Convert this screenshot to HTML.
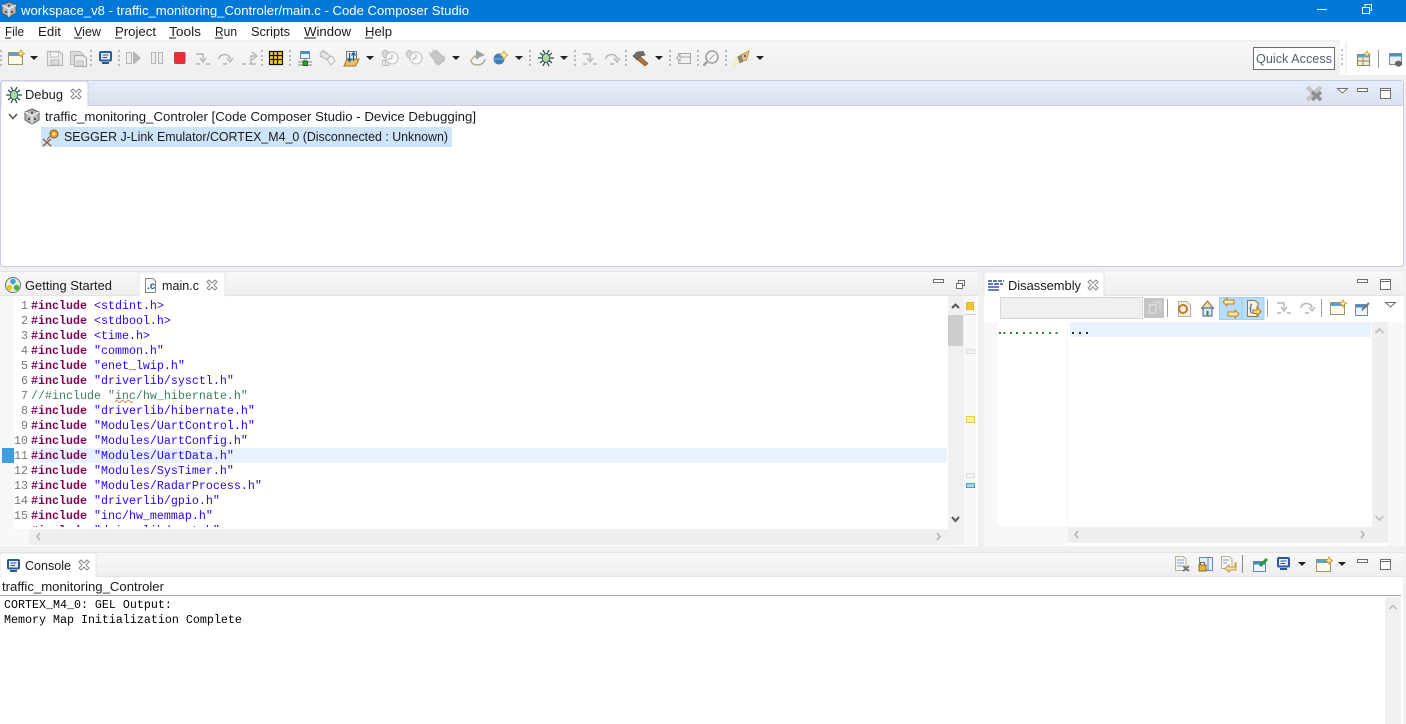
<!DOCTYPE html>
<html><head><meta charset="utf-8"><title>Code Composer Studio</title>
<style>
html,body{margin:0;padding:0;background:#f0f0f0;width:1406px;height:724px;overflow:hidden}
svg{display:block}
text{font-family:"Liberation Sans",sans-serif;font-size:13px;fill:#1a1a1a;white-space:pre}
.m{font-family:"Liberation Mono",monospace;font-size:11.67px}
.k{fill:#7f0055;font-weight:bold}
.s{fill:#2a00ff}
.c{fill:#3f7f5f}
.n{fill:#787878;text-anchor:end}
</style></head><body>
<svg width="1406" height="724" viewBox="0 0 1406 724" xmlns="http://www.w3.org/2000/svg">
<defs>
<linearGradient id="tb" x1="0" y1="0" x2="0" y2="1"><stop offset="0" stop-color="#f8f8f8"/><stop offset="1" stop-color="#eeeeee"/></linearGradient>
<linearGradient id="db" x1="0" y1="0" x2="0" y2="1"><stop offset="0" stop-color="#e7ecfb"/><stop offset="1" stop-color="#dbe0ef"/></linearGradient>
<linearGradient id="hd" x1="0" y1="0" x2="0" y2="1"><stop offset="0" stop-color="#f8f8f8"/><stop offset="1" stop-color="#eeeeee"/></linearGradient>
<symbol id="ar" overflow="visible"><path d="M-4 -2H4L0 2Z" fill="#222"/></symbol>
<symbol id="gr" overflow="visible"><path d="M0 0v2M0 5v2M0 9v2M0 14v2" stroke="#a8a8a0" stroke-width="1.500" fill="none"/></symbol>
<symbol id="x" overflow="visible"><path d="M-5 -3L-3 -5L0 -2L3 -5L5 -3L2 0L5 3L3 5L0 2L-3 5L-5 3L-2 0Z" fill="#fff" stroke="#8a8a8a" stroke-width="1"/></symbol>
<symbol id="min" overflow="visible"><rect x="0" y="0" width="10" height="3" fill="#fff" stroke="#6e6e6e"/></symbol>
<symbol id="max" overflow="visible"><rect x="0" y="0" width="10" height="10" fill="#fff" stroke="#6e6e6e"/><path d="M0 2H10" stroke="#6e6e6e"/></symbol>
<symbol id="new" overflow="visible"><rect x="0.5" y="2.500" width="14" height="12" fill="#fdfbe8" stroke="#a0956a"/><rect x="1" y="3" width="13" height="3" fill="#5b9fd8"/><path d="M13 0l1.200 2.300 2.300 1.200-2.300 1.200-1.200 2.300-1.200-2.300-2.300-1.200 2.300-1.200z" fill="#fff2b0" stroke="#c99a20" stroke-width=".9"/></symbol>
<symbol id="cube" overflow="visible"><path d="M8 0L15 3V11L8 15L1 11V3Z" fill="#b8b8b8" stroke="#5a5a5a"/><path d="M1 3L8 7L15 3M8 7V15" stroke="#f2f2f2" fill="none" stroke-width="1.2"/><circle cx="5" cy="10" r="1" fill="#333"/><circle cx="11" cy="10" r="1" fill="#333"/><circle cx="8" cy="3.5" r="1" fill="#333"/></symbol>
<symbol id="bug" overflow="visible"><path d="M2 3L14 13M14 3L2 13M0 8H16M5 0L7 4M11 0L9 4M5 16L7 12M11 16L9 12" stroke="#28564c" stroke-width="1.300" fill="none"/><ellipse cx="8" cy="8" rx="3.700" ry="4.500" fill="#b4d4a8" stroke="#2d6a5c"/></symbol>
<symbol id="mon" overflow="visible"><rect x="1" y="1" width="11" height="8.500" rx="1" fill="#e8eef8" stroke="#2a5a9c" stroke-width="2"/><path d="M3.500 4H9.500M3.500 6.500H8" stroke="#2a5a9c"/><path d="M3 12H10" stroke="#2a5a9c" stroke-width="2"/></symbol>
<symbol id="into" overflow="visible"><path d="M1 2H8V8M5 6L8 10L11 6M1 12H5M11 12H15" stroke="#b4b4b4" stroke-width="1.4" fill="none"/></symbol>
<symbol id="over" overflow="visible"><path d="M2 7C2 1 13 1 13 7M10 6L13 10L16 6M6 12H10" stroke="#b4b4b4" stroke-width="1.4" fill="none"/></symbol>
</defs>

<rect width="1406" height="724" fill="#f0f0f0"/>
<!-- title -->
<rect width="1406" height="22" fill="#0078d7"/>
<use href="#cube" x="1" y="2"/>
<text x="21" y="15" textLength="448" lengthAdjust="spacingAndGlyphs" style="fill:#fff">workspace_v8 - traffic_monitoring_Controler/main.c - Code Composer Studio</text>
<path d="M1317 9.5H1327" stroke="#fff"/>
<path d="M1362.500 7.500H1369.500V13.500H1362.500ZM1365 7.500V4.500H1371.500V10.500H1369.500" fill="none" stroke="#fff"/>
<!-- menu -->
<rect y="22" width="1406" height="19" fill="#fff"/>
<g>
<text x="5" y="36" textLength="19" lengthAdjust="spacingAndGlyphs">File</text><path d="M5 38H11" stroke="#1a1a1a"/>
<text x="38" y="36" textLength="23" lengthAdjust="spacingAndGlyphs">Edit</text>
<text x="74" y="36" textLength="27" lengthAdjust="spacingAndGlyphs">View</text><path d="M74 38H82" stroke="#1a1a1a"/>
<text x="115" y="36" textLength="41" lengthAdjust="spacingAndGlyphs">Project</text><path d="M115 38H122" stroke="#1a1a1a"/>
<text x="169" y="36" textLength="32" lengthAdjust="spacingAndGlyphs">Tools</text><path d="M169 38H176" stroke="#1a1a1a"/>
<text x="215" y="36" textLength="22" lengthAdjust="spacingAndGlyphs">Run</text><path d="M215 38H223" stroke="#1a1a1a"/>
<text x="251" y="36" textLength="39" lengthAdjust="spacingAndGlyphs">Scripts</text>
<text x="304" y="36" textLength="47" lengthAdjust="spacingAndGlyphs">Window</text><path d="M304 38H316" stroke="#1a1a1a"/>
<text x="365" y="36" textLength="27" lengthAdjust="spacingAndGlyphs">Help</text><path d="M365 38H373" stroke="#1a1a1a"/>
</g>
<!-- toolbar -->
<rect y="41" width="1406" height="34" fill="#fff"/>
<rect y="40" width="1340" height="35" fill="url(#tb)"/>
<rect y="40" width="1340" height="2" fill="#f0f0f0"/>
<rect x="1347" y="42" width="59" height="32" fill="#fff"/>
<rect x="1340" y="42" width="7" height="32" fill="#fff"/>
<rect x="1345" y="42" width="2" height="32" fill="#f0f0f0"/>
<g>
<use href="#gr" x="1" y="50"/><use href="#gr" x="91" y="50"/><use href="#gr" x="119" y="50"/><use href="#gr" x="262" y="50"/><use href="#gr" x="290" y="50"/><use href="#gr" x="530" y="50"/><use href="#gr" x="575" y="50"/><use href="#gr" x="626" y="50"/><use href="#gr" x="670" y="50"/><use href="#gr" x="698" y="50"/><use href="#gr" x="726" y="50"/>
<use href="#gr" x="1342" y="49"/>
<use href="#new" x="8" y="50"/><use href="#ar" x="34" y="58"/>
<!-- save -->
<path d="M47.500 51.500H59.500L62.500 54V65.500H47.500Z" fill="#eee" stroke="#b8b8b8" stroke-width="1.2"/><rect x="50.500" y="52" width="8" height="5" fill="#f8f8f8" stroke="#c0c0c0"/><rect x="51" y="60" width="8" height="5" fill="#ddd" stroke="#b8b8b8"/>
<path d="M70.500 51.500H80L84 55V64.500H70.500Z" fill="#ddd" stroke="#b8b8b8"/><path d="M74.500 55.500H83L86.500 58V66.500H74.500Z" fill="#eee" stroke="#b0b0b0" stroke-width="1.2"/><rect x="77" y="61" width="6" height="5" fill="#ddd" stroke="#b8b8b8"/>
<use href="#mon" x="99" y="51"/>
<!-- resume, suspend, stop -->
<rect x="126.500" y="52.500" width="5" height="11" fill="#eee" stroke="#b4b4b4"/><path d="M133 51V65L141 58Z" fill="#b4b4b4"/>
<rect x="151.500" y="52.500" width="4" height="11" fill="#eee" stroke="#b4b4b4"/><rect x="158.500" y="52.500" width="4" height="11" fill="#eee" stroke="#b4b4b4"/>
<rect x="174.500" y="52.500" width="10.500" height="11" rx="1" fill="#ec2c38" stroke="#c63a3a"/>
<use href="#into" x="195" y="52"/><use href="#over" x="217" y="52"/>
<path d="M242 64H246M251 64V56H255M252 52L257 56L252 60M249 64H256" stroke="#b4b4b4" stroke-width="1.4" fill="none"/>
<!-- table -->
<rect x="270" y="52" width="12" height="12" fill="#ffc832"/><path d="M269.500 51.500H282.500V64.500H269.500ZM273.500 52V64M277.500 52V64M270 55.500H282M270 59.500H282" fill="none" stroke="#111" stroke-width="1.2"/>
<!-- connect -->
<rect x="300.500" y="51.500" width="9" height="7" fill="#eaf3fb" stroke="#6a88a8"/><rect x="300.500" y="51.500" width="9" height="2.500" fill="#4a8cc8"/><path d="M305 58V62M298 62H312M298 65H312" stroke="#8a8a7a"/><rect x="303" y="61" width="4.500" height="4.500" fill="#2e9a3e" stroke="#1d6a2a"/>
<!-- plug disabled -->
<path d="M320 53L324 51L330 56L327 60L321 56Z" fill="#e8e8e8" stroke="#b8b8b8"/><path d="M322 50L324 53M327 52L325 54M320 57L323 56" stroke="#b8b8b8"/><path d="M327 59L332 56L335 61L331 65Z" fill="#f4f4f4" stroke="#b8b8b8"/>
<!-- load -->
<path d="M346.500 51.500H356.500V62.500H346.500Z" fill="#f4f4f4" stroke="#777"/><path d="M344 66L347 59H359L355.500 66Z" fill="#e8c068" stroke="#a07820"/><path d="M349.500 53V61M353.500 53V61M347.500 58.500L349.500 61.500L351.500 58.500M351.500 55.500L353.500 52.500L355.500 55.500" stroke="#1f5f9f" stroke-width="1.300" fill="none"/>
<use href="#ar" x="370" y="58"/>
<!-- clocks -->
<g stroke="#bcbcbc"><path d="M382 52L385 50L393 55L389 62L383 56Z" fill="#d8d8d8"/><path d="M382.500 60.500H388.500V65.500H382.500ZM385.500 60.500V65.500" fill="#eee"/><circle cx="392" cy="58" r="6" fill="#fafafa"/><path d="M392 54V58L388 59.500" fill="none" stroke="#aaa"/></g>
<g stroke="#bcbcbc"><path d="M406 53L409 50L417 55L413 62L407 56Z" fill="#d8d8d8"/><circle cx="416" cy="58" r="6" fill="#fafafa"/><path d="M416 54V58L412 59.500" fill="none" stroke="#aaa"/></g>
<path d="M430 55L436 50L445 59L439 65Z" fill="#c8c8c8" stroke="#bcbcbc"/><path d="M429 52L433 55M432 50L436 53M437 65L434 61M441 64L437 61M444 62L441 59M445 56L442 57" stroke="#bcbcbc" fill="none"/>
<use href="#ar" x="456" y="58"/>
<path d="M471 59C470 67 484 67 485 59M472 59L475 56L478 59" fill="none" stroke="#b0a890" stroke-width="1.400"/><path d="M476 50V59L485 55Z" fill="#9aa8a0"/>
<ellipse cx="499" cy="59" rx="5.500" ry="5.500" fill="#3f7fc0"/><path d="M493.500 59H504.500" stroke="#8fb8e0"/><path d="M504 51l1.500 2.500L508 55l-2.500 1.500L504 59l-1.500-2.500L500 55l2.500-1.500z" fill="#fff3b8" stroke="#d09a20" stroke-width=".8"/>
<use href="#ar" x="519" y="58"/>
<use href="#bug" x="538" y="50"/><use href="#ar" x="564" y="58"/>
<use href="#into" x="582" y="52"/><use href="#over" x="604" y="52"/>
<!-- hammer -->
<path d="M633 56L637 52L643 51.500L645 55L641 56L637 60Z" fill="#6d6d6d" stroke="#444" stroke-width=".6"/><path d="M640 56.500L648 63.500L645 66L637 59.500Z" fill="#b07438" stroke="#7a4a1c" stroke-width=".6"/>
<use href="#ar" x="659" y="58"/>
<!-- block -->
<path d="M678.500 53.500H690.500V63.500H678.500ZM679 57H690" fill="#f0f0f0" stroke="#a8a8a8"/><path d="M676.500 58L680 55V61Z" fill="#fff" stroke="#a8a8a8"/>
<!-- search -->
<circle cx="712" cy="57" r="6" fill="#f4f4f4" stroke="#a0a0a0" stroke-width="1.600"/><path d="M707 62L703.500 65.500" stroke="#9a9a9a" stroke-width="2.400"/><path d="M709.500 59.500L714.500 54.500" stroke="#a0a0a0"/>
<!-- pen -->
<path d="M741 55L749 51L746.500 60L742.500 61Z" fill="#f0c878" stroke="#c49040"/><path d="M737 57L741 54.500L743.500 61.500L739.500 63.500Z" fill="#8e8678"/><path d="M737 57L739.500 63.500L733 66Z" fill="#fff4c8" stroke="#f0e0a0" stroke-width=".6"/><circle cx="745" cy="56" r="1.200" fill="#4070a0"/>
<use href="#ar" x="760" y="58"/>
</g>
<!-- quick access -->
<rect x="1253.500" y="47.500" width="81" height="22" fill="#fff" stroke="#6e6e6e"/>
<text x="1256" y="63" textLength="76" lengthAdjust="spacingAndGlyphs" style="fill:#54606c">Quick Access</text>
<g>
<rect x="1357.500" y="54.500" width="12" height="11" fill="#f4ecd0" stroke="#8a8468"/><rect x="1358" y="55" width="11" height="2.500" fill="#6aa2cc"/><path d="M1363 58V65M1358 61H1369" stroke="#8a8468"/><path d="M1367 51l1 2 2 1-2 1-1 2-1-2-2-1 2-1z" fill="#fff2b0" stroke="#c99a20" stroke-width=".8"/>
<path d="M1378.500 50V68" stroke="#9a9a9a"/>
<rect x="1389.500" y="53.500" width="12" height="11" fill="#e6eef4" stroke="#6f8da5"/><rect x="1390" y="54" width="11" height="2.500" fill="#4a8cc8"/><path d="M1395 62L1398.500 60.500L1402 62V65L1398.500 67L1395 65Z" fill="#666"/>
</g>
<!-- DEBUG panel -->
<rect x="0.500" y="80.500" width="1403" height="186" rx="3" fill="#fff" stroke="#c6cbdf"/>
<rect x="1" y="81" width="1402" height="25" fill="url(#db)"/>
<path d="M1 105.500H1403" stroke="#c8cde0"/>
<path d="M1 106V84Q1 81 4 81H85Q88 81 88 84V106Z" fill="#fff" stroke="#c8cde0"/>
<rect x="2" y="104" width="85" height="3" fill="#fff"/>
<use href="#bug" x="6" y="87"/>
<text x="25" y="99" textLength="38" lengthAdjust="spacingAndGlyphs">Debug</text>
<use href="#x" x="76" y="94"/>
<path d="M1307 87L1321 100M1321 87L1307 100" stroke="#c4c4c4" stroke-width="4"/><path d="M1312 92L1321 100M1321 92L1312 100" stroke="#8e8e8e" stroke-width="3.400"/>
<path d="M1337.500 88.500H1347.500L1342.500 93Z" fill="#fff" stroke="#6e6e6e"/>
<use href="#min" x="1357.500" y="88.500"/>
<use href="#max" x="1380.500" y="88.500"/>
<path d="M9 114L13 118.500L17 114" stroke="#555" stroke-width="1.600" fill="none"/>
<use href="#cube" x="24" y="109"/>
<text x="45" y="121" textLength="431" lengthAdjust="spacingAndGlyphs">traffic_monitoring_Controler [Code Composer Studio - Device Debugging]</text>
<rect x="41" y="127" width="411" height="20" fill="#cde4fa"/>
<path d="M43 139L51 146M51 139L43 146" stroke="#9a5030" stroke-width="1.300"/><path d="M47 140L50 136" stroke="#776" stroke-width="1.200"/><circle cx="54" cy="134" r="4" fill="#e8a028" stroke="#8a5a10"/><circle cx="54" cy="134" r="1.400" fill="#fff2c0"/>
<text x="64" y="141" textLength="384" lengthAdjust="spacingAndGlyphs">SEGGER J-Link Emulator/CORTEX_M4_0 (Disconnected : Unknown)</text>

<!-- EDITOR panel -->
<rect x="0" y="271" width="978" height="275" fill="#fff"/>
<rect x="0" y="272" width="978" height="24" fill="url(#hd)"/>
<path d="M0 271.500H978" stroke="#e4e4e4"/>
<path d="M0 295.500H978" stroke="#e4e4e4"/>
<path d="M139 296V274Q139 272 141 272H223Q225 272 225 274V296Z" fill="#fff" stroke="#e4e4e4"/>
<rect x="140" y="294" width="84" height="3" fill="#fff"/>
<circle cx="13" cy="285" r="7.500" fill="#e4ece4" stroke="#6a7a6a"/><circle cx="13" cy="281.500" r="2.700" fill="#3aa0dc"/><circle cx="9.500" cy="287.500" r="2.700" fill="#e8c820"/><circle cx="16.500" cy="287.500" r="2.700" fill="#4cae3c"/>
<text x="25" y="290" textLength="87" lengthAdjust="spacingAndGlyphs">Getting Started</text>
<path d="M145.500 278.500H153L155.500 281V292.500H145.500Z" fill="#f8fbff" stroke="#8a8a7a"/><text x="147" y="289" style="font-size:10px;font-weight:bold;fill:#1a5a8c">.c</text>
<text x="162" y="290" textLength="37" lengthAdjust="spacingAndGlyphs">main.c</text>
<use href="#x" x="212" y="285"/>
<use href="#min" x="933.500" y="279.500"/>
<path d="M956.500 283.500H962.500V288.500H956.500ZM958.500 283V280.500H964.500V285.500H962.500" fill="#fff" stroke="#6e6e6e"/>
<!-- gutter -->
<rect x="0" y="296" width="14" height="250" fill="#f8f8f8"/>
<rect x="2" y="448" width="12" height="15" fill="#3d9fe0"/>
<rect x="31" y="448" width="916" height="15" fill="#e8f2fe"/>
<g class="m">
<text class="m n" x="28" y="309">1</text><text class="m n" x="28" y="324">2</text><text class="m n" x="28" y="339">3</text><text class="m n" x="28" y="354">4</text><text class="m n" x="28" y="369">5</text><text class="m n" x="28" y="384">6</text><text class="m n" x="28" y="399">7</text><text class="m n" x="28" y="414">8</text><text class="m n" x="28" y="429">9</text><text class="m n" x="28" y="444">10</text><text class="m n" x="28" y="459">11</text><text class="m n" x="28" y="474">12</text><text class="m n" x="28" y="489">13</text><text class="m n" x="28" y="504">14</text><text class="m n" x="28" y="519">15</text>
<text class="m" x="31" y="309"><tspan class="k">#include</tspan> <tspan class="s">&lt;stdint.h&gt;</tspan></text>
<text class="m" x="31" y="324"><tspan class="k">#include</tspan> <tspan class="s">&lt;stdbool.h&gt;</tspan></text>
<text class="m" x="31" y="339"><tspan class="k">#include</tspan> <tspan class="s">&lt;time.h&gt;</tspan></text>
<text class="m" x="31" y="354"><tspan class="k">#include</tspan> <tspan class="s">"common.h"</tspan></text>
<text class="m" x="31" y="369"><tspan class="k">#include</tspan> <tspan class="s">"enet_lwip.h"</tspan></text>
<text class="m" x="31" y="384"><tspan class="k">#include</tspan> <tspan class="s">"driverlib/sysctl.h"</tspan></text>
<text class="m c" x="31" y="399">//#include "inc/hw_hibernate.h"</text>
<text class="m" x="31" y="414"><tspan class="k">#include</tspan> <tspan class="s">"driverlib/hibernate.h"</tspan></text>
<text class="m" x="31" y="429"><tspan class="k">#include</tspan> <tspan class="s">"Modules/UartControl.h"</tspan></text>
<text class="m" x="31" y="444"><tspan class="k">#include</tspan> <tspan class="s">"Modules/UartConfig.h"</tspan></text>
<text class="m" x="31" y="459"><tspan class="k">#include</tspan> <tspan class="s">"Modules/UartData.h"</tspan></text>
<text class="m" x="31" y="474"><tspan class="k">#include</tspan> <tspan class="s">"Modules/SysTimer.h"</tspan></text>
<text class="m" x="31" y="489"><tspan class="k">#include</tspan> <tspan class="s">"Modules/RadarProcess.h"</tspan></text>
<text class="m" x="31" y="504"><tspan class="k">#include</tspan> <tspan class="s">"driverlib/gpio.h"</tspan></text>
<text class="m" x="31" y="519"><tspan class="k">#include</tspan> <tspan class="s">"inc/hw_memmap.h"</tspan></text>
<text class="m" x="31" y="534"><tspan class="k">#include</tspan> <tspan class="s">"driverlib/uart.h"</tspan></text>
</g>
<path d="M115 401.500q1.500-2 3 0t3 0 3 0 3 0 3 0 3 0" stroke="#d86a30" fill="none" stroke-width=".8"/>
<!-- bottom scroll + right -->
<rect x="0" y="527" width="14" height="19" fill="#f8f8f8"/>
<rect x="14" y="527" width="960" height="2" fill="#fff"/>
<rect x="14" y="529" width="15" height="17" fill="#f8f8f8"/>
<rect x="29" y="529" width="935" height="16" fill="#efefef"/>
<rect x="0" y="545" width="978" height="1" fill="#fff"/>
<rect x="948" y="296" width="16" height="249" fill="#f0f0f0"/>
<rect x="948" y="315" width="15" height="31" fill="#cdcdcd"/>
<path d="M952 308L955.500 304.500L959 308" stroke="#555" stroke-width="2" fill="none"/>
<path d="M952 517L955.500 521L959 517" stroke="#555" stroke-width="2" fill="none"/>
<path d="M40 533L37 536.500L40 540" stroke="#b8b8b8" stroke-width="1.800" fill="none"/>
<path d="M937 533L940 536.500L937 540" stroke="#b8b8b8" stroke-width="1.800" fill="none"/>
<rect x="964" y="296" width="12" height="249" fill="#f8f8f8"/>
<path d="M964 314.500H976" stroke="#cfcfcf"/>
<rect x="966.500" y="302.500" width="7" height="7" fill="#f5c52a" stroke="#e0b030"/>
<rect x="966.500" y="349.500" width="8" height="4" fill="#f4f4f4" stroke="#ddd"/>
<rect x="966.500" y="416.500" width="8" height="6" fill="#fff0a0" stroke="#f0cc48"/>
<rect x="966.500" y="473.500" width="8" height="4" fill="#f4f4f4" stroke="#ddd"/>
<rect x="966.500" y="483.500" width="8" height="4" fill="#a8d4f8" stroke="#40a0f0"/>

<!-- DISASSEMBLY panel -->
<rect x="984" y="272" width="420" height="274" fill="#fff"/>
<rect x="984" y="272" width="420" height="24" fill="url(#hd)"/>
<path d="M984 295.500H1403" stroke="#e4e4e4"/>
<path d="M984 296V274Q984 272 986 272H1102Q1104 272 1104 274V296Z" fill="#fff" stroke="#e4e4e4"/>
<rect x="985" y="294" width="118" height="3" fill="#fff"/>
<g stroke-width="1.400" fill="none"><path d="M988 281H1004" stroke="#2a4a9c" stroke-dasharray="4 1"/><path d="M988 284H1003" stroke="#2a4a9c" stroke-dasharray="5 1"/><path d="M988 287H999" stroke="#2a4a9c"/><path d="M988 290H999" stroke="#2a4a9c"/></g>
<text x="1008" y="290" textLength="73" lengthAdjust="spacingAndGlyphs">Disassembly</text>
<use href="#x" x="1093" y="285"/>
<use href="#min" x="1357.500" y="279.500"/>
<use href="#max" x="1380.500" y="279.500"/>
<!-- dis toolbar -->
<rect x="1000.500" y="297.500" width="142" height="21" fill="#f0f0f0" stroke="#d8d8d8"/>
<rect x="1144" y="298" width="20" height="20" fill="#c4c4c4"/>
<path d="M1149.500 304.500H1156V313H1149.500ZM1153 302H1160V310" fill="none" stroke="#dedede" stroke-width="1.300"/>
<path d="M1167.500 299V317" stroke="#a0a0a0"/>
<path d="M1178.500 301.500H1187L1190.500 305V316.500H1178.500Z" fill="#f4f0e4" stroke="#b8b0a0"/><circle cx="1183" cy="309" r="4" fill="none" stroke="#c47a20" stroke-width="2"/>
<path d="M1201 309L1207.500 301L1214 309" fill="#e8dcb0" stroke="#8a6a2c"/><rect x="1203" y="308" width="9" height="8" fill="#dce8f4" stroke="#2a5a9c"/><rect x="1206.500" y="311" width="2" height="5" fill="#3a8a3a"/>
<rect x="1219.500" y="297.500" width="22" height="22" fill="#b8dcfb" stroke="#a0d0f8"/>
<rect x="1242" y="297.500" width="22" height="22" fill="#b8dcfb" stroke="#a0d0f8"/>
<path d="M1223 302L1227 298V300H1234V304H1227V306ZM1239 314L1235 310V312H1228V316H1235V318Z" fill="#f8e8a8" stroke="#c08020"/>
<path d="M1247.500 300.500H1255L1258 303V316.500H1247.500Z" fill="#f4f0e4" stroke="#8a7a50"/><path d="M1252 304Q1250 305 1251 307Q1251 308 1250 308.500Q1251 309 1251 310Q1250 312 1252 313" stroke="#2a5a9c" fill="none"/><path d="M1253 310H1257V307L1261 311.500L1257 316V313.500H1253Z" fill="#f8d878" stroke="#b07820"/>
<path d="M1267.500 299V317" stroke="#a0a0a0"/>
<use href="#into" x="1276" y="301"/><use href="#over" x="1299" y="301"/>
<path d="M1321.500 299V317" stroke="#a0a0a0"/>
<use href="#new" x="1330" y="300"/>
<rect x="1355.500" y="304.500" width="12" height="11" fill="#eef4fa" stroke="#6f8da5"/><rect x="1356" y="305" width="11" height="2.500" fill="#4a8cc8"/><path d="M1362 310L1369 303" stroke="#777" stroke-width="2"/>
<path d="M1385.500 302.500H1395.500L1390.500 307Z" fill="#fff" stroke="#6e6e6e"/>
<!-- dis body -->
<rect x="984" y="322" width="13" height="224" fill="#f8f8f8"/>
<rect x="984" y="541" width="84" height="4" fill="#f8f8f8"/>
<rect x="997" y="322" width="70" height="204" fill="#fff"/>
<rect x="997" y="526" width="71" height="19" fill="#f8f8f8"/>
<path d="M1067.500 322V526" stroke="#f2f2f2"/>
<rect x="1070" y="322" width="301" height="15" fill="#e8f2fe"/>
<path d="M999 333h2M1003.500 333h2M1010 333h2M1016 333h2M1023 333h2M1029.500 333h2M1036 333h2M1042 333h2M1049 333h2M1055.500 333h2" stroke="#2e7d3a" stroke-width="2"/>
<path d="M1072 333h2M1079 333h2M1086 333h2" stroke="#222f60" stroke-width="2"/>
<rect x="1372" y="322" width="16" height="205" fill="#efefef"/>
<rect x="1388" y="322" width="15" height="224" fill="#f8f8f8"/>
<path d="M1375.500 333L1379.500 329L1383.500 333" stroke="#c0c0c0" stroke-width="1.800" fill="none"/>
<path d="M1375.500 516L1379.500 520L1383.500 516" stroke="#c0c0c0" stroke-width="1.800" fill="none"/>
<rect x="1068" y="527" width="320" height="16" fill="#efefef"/>
<path d="M1078 531L1075 534.500L1078 538" stroke="#b8b8b8" stroke-width="1.800" fill="none"/>
<path d="M1361 531L1364 534.500L1361 538" stroke="#b8b8b8" stroke-width="1.800" fill="none"/>

<!-- CONSOLE panel -->
<rect x="0" y="552" width="1403" height="172" fill="#fff"/>
<rect x="0" y="553" width="1403" height="24" fill="url(#hd)"/>
<path d="M0 552.500H1403M0 576.500H1403" stroke="#e4e4e4"/>
<path d="M0 577V555Q0 553 2 553H94Q96 553 96 555V577Z" fill="#fff" stroke="#e4e4e4"/>
<rect x="1" y="575" width="94" height="3" fill="#fff"/>
<use href="#mon" x="7" y="559"/>
<text x="25" y="570" textLength="46" lengthAdjust="spacingAndGlyphs">Console</text>
<use href="#x" x="84" y="565"/>
<!-- console tools -->
<path d="M1175.500 556.500H1183L1186 559V570.500H1175.500Z" fill="#f4f6fa" stroke="#b8b090"/><path d="M1177 560H1184M1177 563H1184M1177 566H1182" stroke="#7f9ac8"/><path d="M1183 566L1189 571M1189 566L1183 571" stroke="#777" stroke-width="2"/>
<rect x="1199.500" y="557.500" width="13" height="13" fill="#e4eef8" stroke="#6a86b8"/><path d="M1208 558V570" stroke="#6a86b8"/><rect x="1199" y="565" width="7" height="6" fill="#e8b040" stroke="#8a6a20"/><path d="M1200.500 565V562.500H1204.500V565" fill="none" stroke="#7a6a40"/>
<path d="M1221.500 556.500H1229L1232 559V568.500H1221.500Z" fill="#f4f6fa" stroke="#b8b090"/><path d="M1223 560H1229M1223 563H1227" stroke="#7f9ac8"/><path d="M1235 563V567H1229V565L1225 568.500L1229 572V570H1236V563Z" fill="#f8e8a8" stroke="#c89840"/>
<path d="M1242.500 555V573" stroke="#8a8a8a"/>
<rect x="1253.500" y="561.500" width="12" height="10" fill="#eef4fa" stroke="#6a86a8"/><rect x="1254" y="562" width="11" height="2.500" fill="#3a8cc8"/><path d="M1260 566L1267 559" stroke="#249a3e" stroke-width="3"/>
<use href="#mon" x="1277" y="557"/><use href="#ar" x="1302" y="564"/>
<use href="#new" x="1316" y="557"/><use href="#ar" x="1342" y="564"/>
<use href="#min" x="1357.500" y="559.500"/>
<use href="#max" x="1380.500" y="559.500"/>
<text x="2" y="591" textLength="162" lengthAdjust="spacingAndGlyphs">traffic_monitoring_Controler</text>
<path d="M0 595.500H1401" stroke="#a8a8a8"/>
<text class="m" x="4" y="608" style="fill:#000">CORTEX_M4_0: GEL Output:</text>
<text class="m" x="4" y="623" style="fill:#000">Memory Map Initialization Complete</text>
<rect x="1385" y="597" width="16" height="127" fill="#f0f0f0"/>
<path d="M1389.500 609L1393 605.500L1396.500 609" stroke="#c0c0c0" stroke-width="1.800" fill="none"/>
</svg>
</body></html>
